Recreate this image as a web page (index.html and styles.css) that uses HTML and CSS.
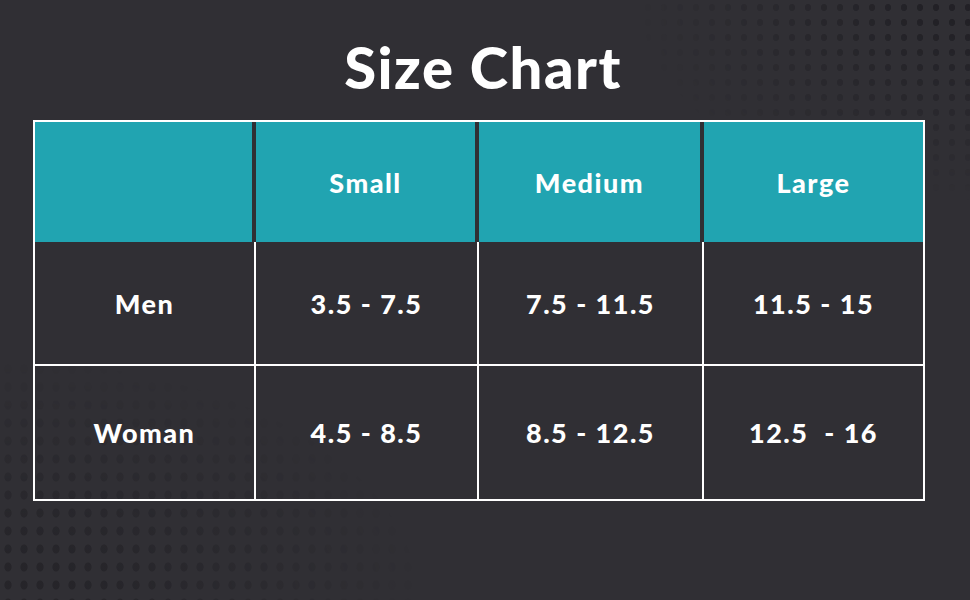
FILE: index.html
```html
<!DOCTYPE html>
<html lang="en">
<head>
<meta charset="utf-8">
<title>Size Chart</title>
<link rel="stylesheet" href="styles.css">
</head>
<body>
<div class="bg-dots bg-dots-tr"></div>
<div class="bg-dots bg-dots-bl"></div>
<main class="page">
  <h1 class="title">Size Chart</h1>
  <div class="chart">
    <div class="cell head first"></div>
    <div class="cell head mid">Small</div>
    <div class="cell head mid">Medium</div>
    <div class="cell head last">Large</div>

    <div class="cell body first">Men</div>
    <div class="cell body inner">3.5 - 7.5</div>
    <div class="cell body inner">7.5 - 11.5</div>
    <div class="cell body inner">11.5 - 15</div>

    <div class="cell body first row2">Woman</div>
    <div class="cell body inner row2">4.5 - 8.5</div>
    <div class="cell body inner row2">8.5 - 12.5</div>
    <div class="cell body inner row2">12.5&nbsp; - 16</div>
  </div>
</main>
</body>
</html>
```
FILE: styles.css
```css
html {
  background: #302f34;
}
body {
  margin: 0;
  min-height: 600px;
  font-family: "Lato", "DejaVu Sans", sans-serif;
  color: #ffffff;
  position: relative;
  overflow: hidden;
}
.bg-dots {
  position: absolute;
  inset: 0;
  pointer-events: none;
  z-index: 0;
}
.bg-dots-tr {
  background-image: radial-gradient(ellipse 3.5px 4px at center, rgba(20, 19, 24, 0.5) 80%, transparent 100%);
  background-size: 16px 15px;
  -webkit-mask-image: radial-gradient(ellipse 330px 200px at 100% 0%, #000 10%, transparent 100%);
  mask-image: radial-gradient(ellipse 330px 200px at 100% 0%, #000 10%, transparent 100%);
}
.bg-dots-bl {
  background-image: radial-gradient(ellipse 4px 5px at center, rgba(20, 19, 24, 0.35) 80%, transparent 100%);
  background-size: 16px 18px;
  -webkit-mask-image: radial-gradient(ellipse 420px 240px at 0% 100%, #000 20%, transparent 100%);
  mask-image: radial-gradient(ellipse 420px 240px at 0% 100%, #000 20%, transparent 100%);
}
.page {
  position: relative;
  z-index: 1;
  padding-top: 32px;
}
.title {
  margin: 0 0 18px;
  text-align: center;
  font-size: 58px;
  line-height: 70px;
  font-weight: 900;
  letter-spacing: 1.5px;
  padding-right: 4px;
}
.chart {
  display: grid;
  grid-template-columns: 219px 223px 225px 221px;
  grid-template-rows: 120px 122px 135px;
  width: 888px;
  margin-left: 33px;
  border: 2px solid #ffffff;
}
.cell {
  display: flex;
  align-items: center;
  justify-content: center;
  font-size: 27px;
  font-weight: 900;
  letter-spacing: 1.5px;
  box-sizing: border-box;
}
.head {
  background: #21a4b1;
  border-color: #302f34;
  border-style: solid;
  border-width: 0;
}
.head.first {
  border-right-width: 2px;
}
.head.mid {
  border-left-width: 2px;
  border-right-width: 2px;
}
.head.last {
  border-left-width: 2px;
}
.body.inner {
  border-left: 2px solid #ffffff;
}
.row2 {
  border-top: 2px solid #ffffff;
}
```
